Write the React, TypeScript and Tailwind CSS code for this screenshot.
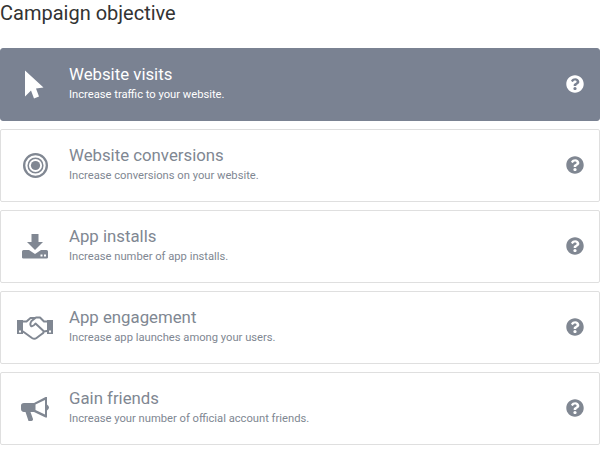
import { FaQuestionCircle } from "react-icons/fa";
import type { ReactNode } from "react";

const Cursor = () => (
  <svg width="20" height="29" viewBox="0 0 20 29" fill="currentColor" className="ml-[-2px]">
    <path d="M1 0.5 L19.5 17.5 L12 18.5 L15 26.5 L10 28.5 L7 20.5 L1 26.5 Z" />
  </svg>
);

const Target = () => (
  <svg width="25" height="25" viewBox="0 0 26 26" fill="none" stroke="currentColor">
    <circle cx="13" cy="13" r="11.8" strokeWidth="2.4" />
    <circle cx="13" cy="13" r="7.6" strokeWidth="1.6" />
    <circle cx="13" cy="13" r="4.8" fill="currentColor" stroke="none" />
  </svg>
);

const Install = () => (
  <svg width="26" height="25" viewBox="0 0 26 25" fill="currentColor">
    <path d="M9.5 0 H16.5 V8 H21 L13 16 L5 8 H9.5 Z" />
    <path fillRule="evenodd" d="M1.5 16 H7 L13 20 L19 16 H24.5 Q26 16 26 17.5 V23.5 Q26 24.5 24.5 24.5 H1.5 Q0 24.5 0 23.5 V17.5 Q0 16 1.5 16 Z M18.5 20.5 V22.5 H20.5 V20.5 Z M22 20.5 V22.5 H24 V20.5 Z" />
  </svg>
);

const Handshake = () => (
  <svg width="36" height="24" viewBox="0 0 36 24">
    <path fill="currentColor" fillRule="evenodd" d="M0 4 H6 V18 H0 Z M2 14.5 V16.5 H4 V14.5 Z" />
    <path fill="currentColor" fillRule="evenodd" d="M30 4 H36 V18 H30 Z M32 14.5 V16.5 H34 V14.5 Z" />
    <path fill="none" stroke="currentColor" strokeWidth="2" strokeLinejoin="round" strokeLinecap="round" d="M6 5.5 H9.5 L13.5 2 H18 M30 5.5 H27 L23 1.5 H19 L14.5 5 Q12.5 8 14 10 Q16 11 18.5 7.5 L26 14.5 Q27.5 16.5 25.5 17.5 L19.5 22 Q17.5 23.5 15 22 L6 15.5 M26.5 15.5 L30 15" />
  </svg>
);

const Megaphone = () => (
  <svg width="28" height="24" viewBox="0 0 28 24" fill="currentColor">
    <path fillRule="evenodd" d="M24.5 0 H26 V7.5 Q28 9 28 10.5 Q28 12 26 13.5 V20.5 H24.5 L13 15 H9.5 L12 22 Q12.5 23.5 10.5 24 H7.5 L4.5 15 H3 Q0 14.5 0 12 V8.5 Q0 6 3 6 H13 Z M14.5 7.5 V13 L24 17.5 V3 Z" />
  </svg>
);

function Card({ icon, title, text, active }: { icon: ReactNode; title: string; text: string; active?: boolean }) {
  return (
    <div
      className={
        active
          ? "flex h-[73px] items-center rounded-[3px] border border-[#7a8292] bg-[#7a8292] text-white"
          : "flex h-[73px] items-center rounded-[2px] border border-[#dfdfdf] bg-white text-[#808792]"
      }
    >
      <div className="flex w-[68px] shrink-0 items-center justify-center">{icon}</div>
      <div className="flex min-w-0 flex-1 flex-col pb-[4px]">
        <div className={"text-[16.8px] leading-[20px] " + (active ? "text-white" : "text-[#808792]")}>{title}</div>
        <div className={"mt-[4px] text-[11.2px] leading-[14px] " + (active ? "text-white" : "text-[#808792]")}>{text}</div>
      </div>
      <div className="mr-[15px] flex w-[18px] items-center justify-center pb-[1px]">
        <FaQuestionCircle size={18} />
      </div>
    </div>
  );
}

export default function App() {
  return (
    <div className="h-[450px] w-[600px] overflow-hidden bg-white font-['Roboto',sans-serif]">
      <div className="h-[48px] text-[20px] leading-[26px] text-[#333333]">Campaign objective</div>
      <div className="flex flex-col gap-2">
        <Card active icon={<Cursor />} title="Website visits" text="Increase traffic to your website." />
        <Card icon={<Target />} title="Website conversions" text="Increase conversions on your website." />
        <Card icon={<Install />} title="App installs" text="Increase number of app installs." />
        <Card icon={<Handshake />} title="App engagement" text="Increase app launches among your users." />
        <Card icon={<Megaphone />} title="Gain friends" text="Increase your number of official account friends." />
      </div>
    </div>
  );
}
